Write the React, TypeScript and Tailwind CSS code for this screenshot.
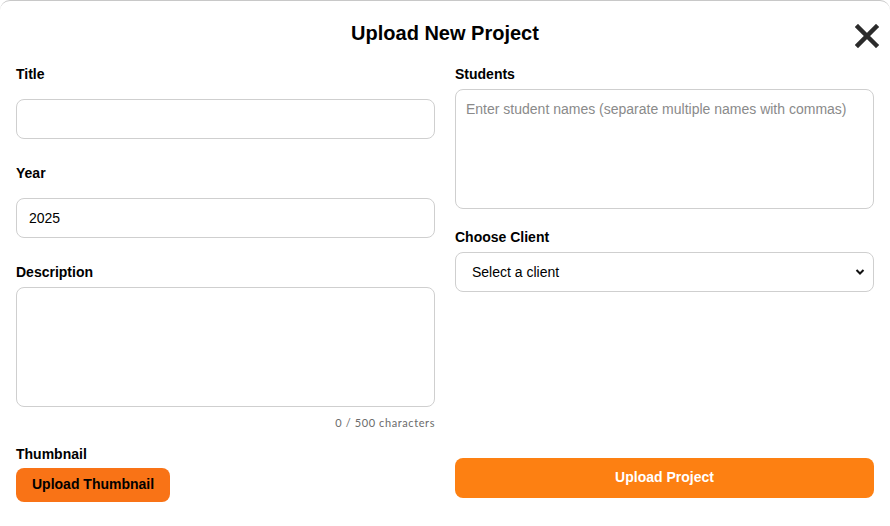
export default function App() {
	return (
		<div className="w-[890px] h-[526px] bg-white overflow-hidden font-['Liberation_Sans',Arial,sans-serif] text-black">
			<div className="h-full rounded-t-[10px] border-t border-[#c8c8c8] px-4 pt-[19px] relative">

				{/* header */}
				<div className="flex justify-center h-[26px] items-center">
					<h2 className="text-[20px] font-bold">Upload New Project</h2>
				</div>
				<button className="absolute right-[10px] top-[22px] w-[26px] h-[26px] flex items-center justify-center">
					<svg width="24" height="24" viewBox="0 0 24 24">
						<path d="M3 3 L21 21 M21 3 L3 21" stroke="#2b2b2b" strokeWidth="4.5" strokeLinecap="square" />
					</svg>
				</button>

				<div className="grid grid-cols-2 gap-x-5 mt-[20px]">

					{/* left column */}
					<div className="flex flex-col">
						<Label text="Title" />
						<input className="mt-[17px] h-10 w-full rounded-lg border border-[#cfcfcf] px-3 text-[14px] outline-none" />

						<div className="mt-[26px]"><Label text="Year" /></div>
						<input defaultValue="2025" className="mt-[17px] h-10 w-full rounded-lg border border-[#cfcfcf] px-3 text-[14px] outline-none" />

						<div className="mt-[26px]"><Label text="Description" /></div>
						<textarea className="mt-[7px] h-[120px] w-full rounded-lg border border-[#cfcfcf] px-3 py-2 text-[14px] resize-none outline-none" />
						<div className="mt-[8px] text-right text-[11px] text-[#6b6b6b] font-['Lato',sans-serif] tracking-[0.6px]">0 / 500 characters</div>

						<div className="mt-[14px]"><Label text="Thumbnail" /></div>
						<div className="mt-[6px]">
							<button className="h-[34px] px-4 rounded-lg bg-[#f97316] text-[14px] font-bold text-black">
								Upload Thumbnail
							</button>
						</div>
					</div>

					{/* right column */}
					<div className="flex flex-col">
						<Label text="Students" />
						<textarea
							placeholder="Enter student names (separate multiple names with commas)"
							className="mt-[7px] h-[120px] w-full rounded-lg border border-[#cfcfcf] px-[10px] py-[10px] text-[14px] leading-[18px] resize-none outline-none placeholder:text-[#8a8a8a]"
						/>

						<div className="mt-[20px]"><Label text="Choose Client" /></div>
						<div className="mt-[7px] relative">
							<select className="appearance-none h-10 w-full rounded-lg border border-[#cfcfcf] bg-white pl-4 pr-8 text-[14px] outline-none">
								<option>Select a client</option>
							</select>
							<svg className="absolute right-[9px] top-[16px]" width="10" height="8" viewBox="0 0 10 8">
								<path d="M1.5 2 L5 5.5 L8.5 2" stroke="#111" strokeWidth="2" fill="none" />
							</svg>
						</div>

						<div className="flex-1" />
						<button className="mb-[4px] h-10 w-full rounded-lg bg-[#fd8012] text-[14px] font-bold text-white">
							Upload Project
						</button>
					</div>

				</div>
			</div>
		</div>
	);
}

function Label({ text }: { text: string }) {
	return (
		<label className="block text-[14px] leading-[16px] font-bold">
			{text}
		</label>
	)
}
